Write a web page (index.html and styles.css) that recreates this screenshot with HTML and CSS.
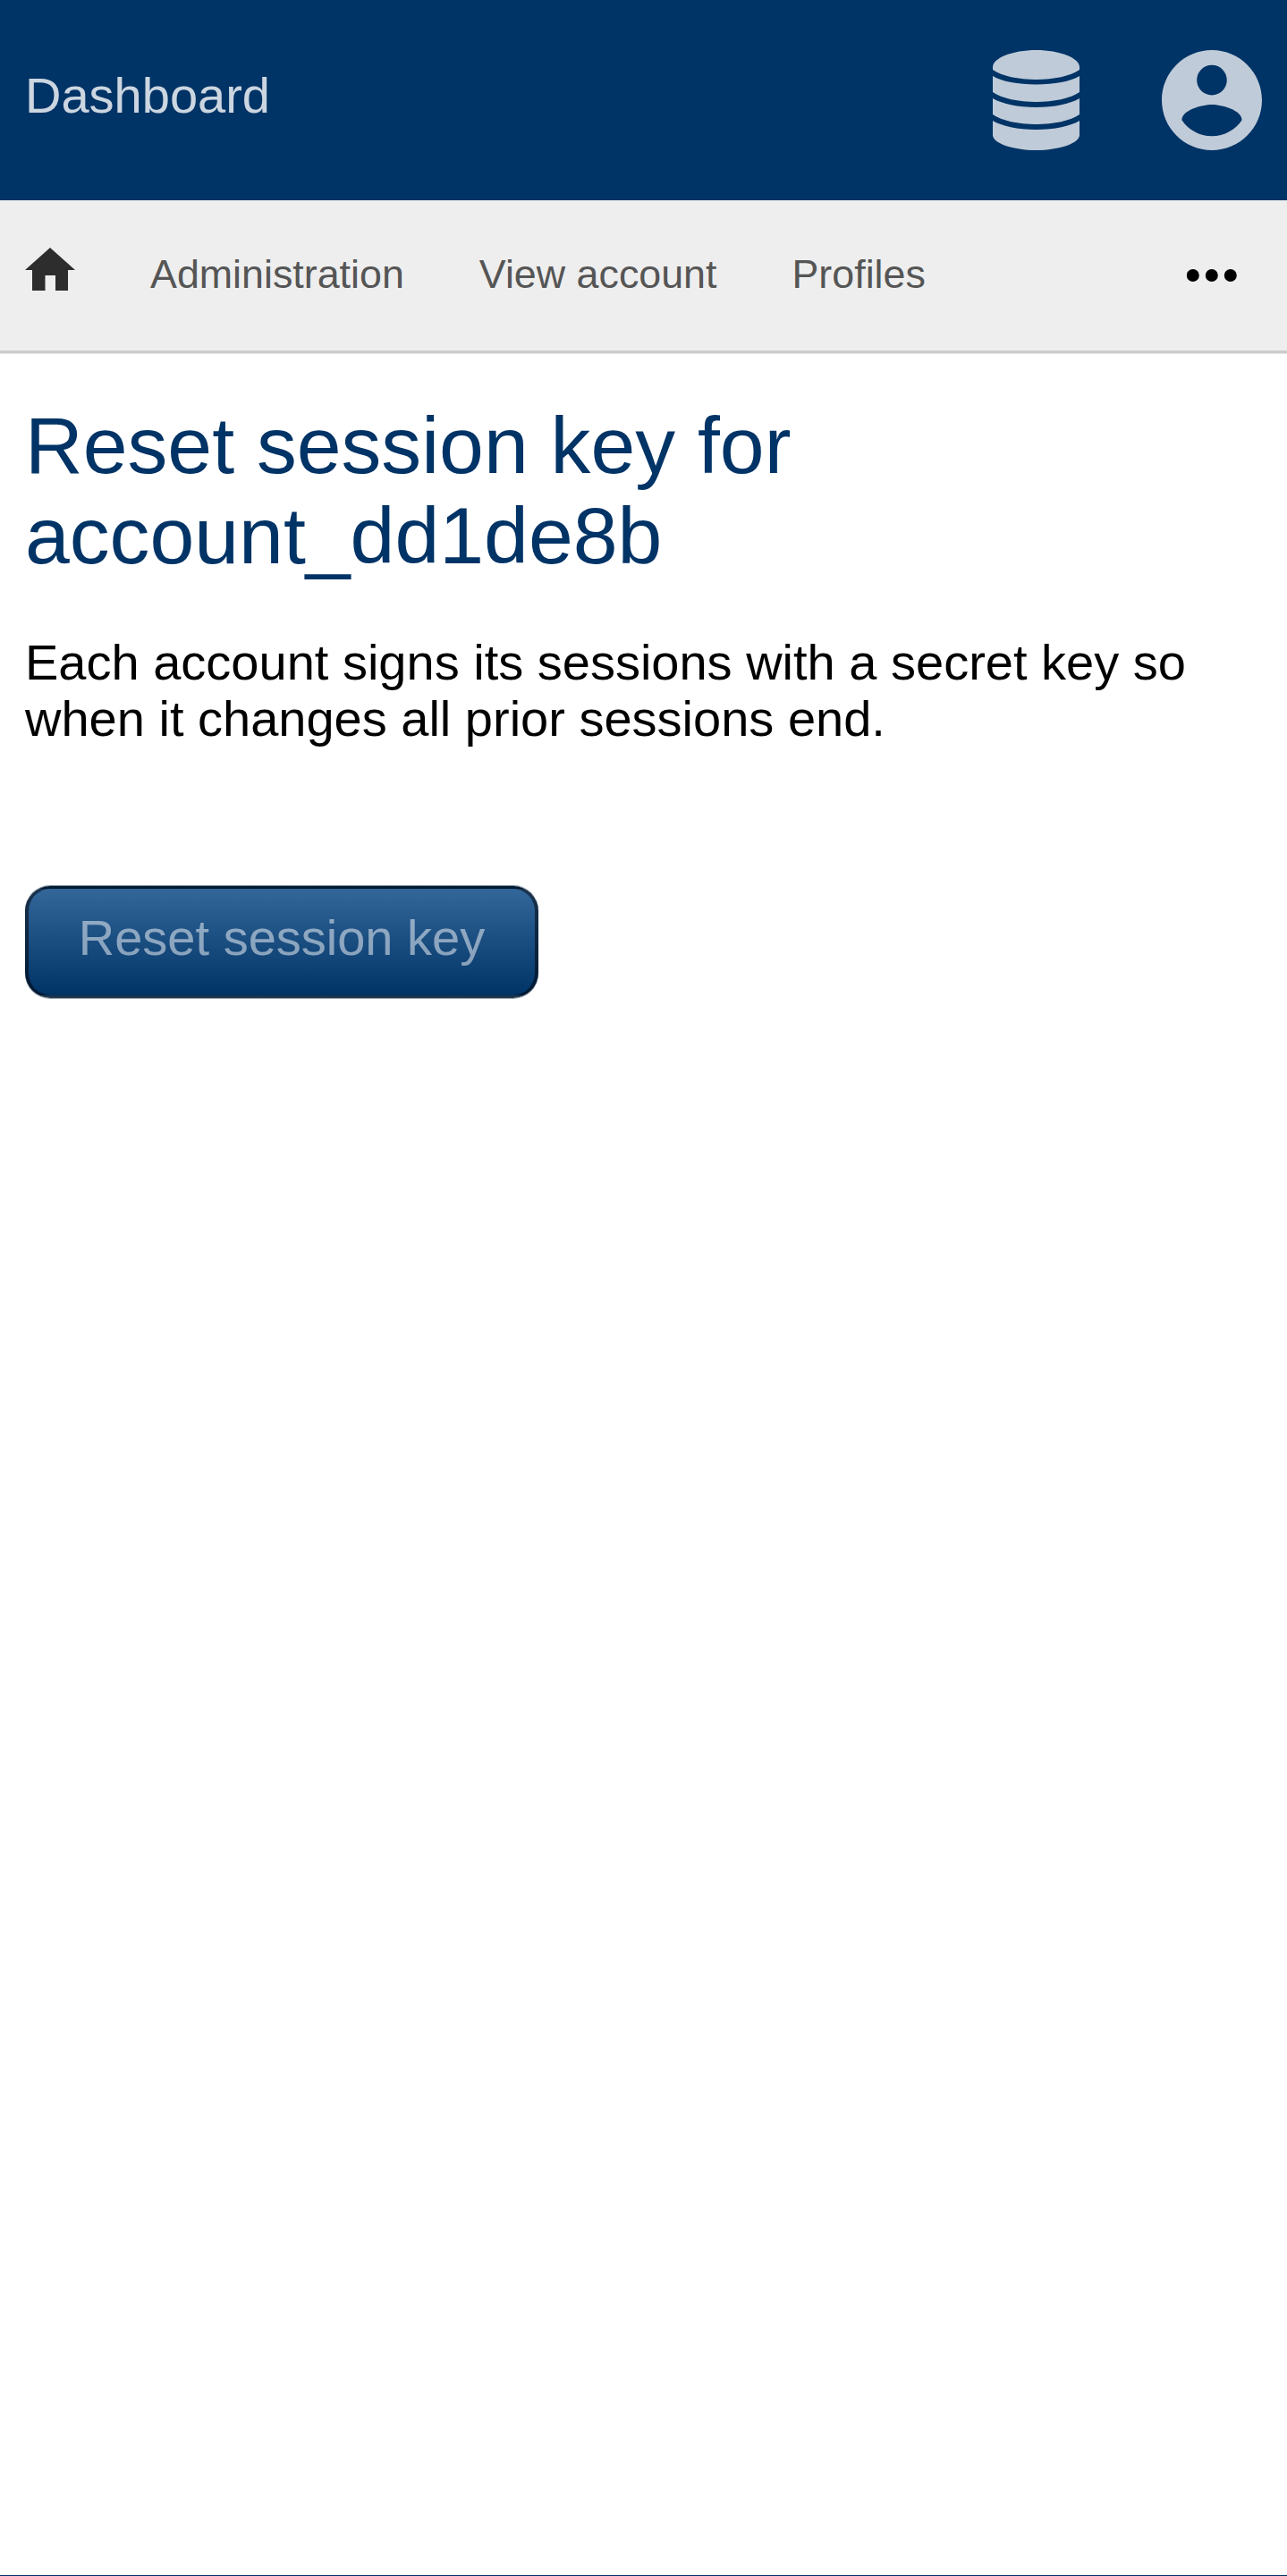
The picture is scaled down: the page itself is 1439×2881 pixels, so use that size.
FILE: index.html
```html
<!DOCTYPE html>
<html lang="en">
<head>
<meta charset="utf-8">
<title>Reset session key</title>
<link rel="stylesheet" href="styles.css">
</head>
<body>
<header class="header">
  <a class="brand">Dashboard</a>
  <div class="menus">
    <svg class="database" viewBox="0 0 97 112">
      <path d="M0 19C0 9 22 0 48.500 0S97 9 97 19V22C87 29 68 33 48.500 33S10 29 0 22Z"/>
      <path d="M0 29C10 35 28 38.500 48.500 38.500S87 35 97 29V47C87 54 68 58 48.500 58S10 54 0 47Z"/>
      <path d="M0 54C10 60 28 64 48.500 64S87 60 97 54V72C87 79 68 83 48.500 83S10 79 0 72Z"/>
      <path d="M0 79C10 85 28 89 48.500 89S87 85 97 79V95C97 104 75 112 48.500 112S0 104 0 95Z"/>
    </svg>
    <svg class="account" viewBox="2 2 20 20"><path d="M12 2C6.480 2 2 6.480 2 12s4.480 10 10 10 10-4.480 10-10S17.520 2 12 2zm0 3c1.660 0 3 1.340 3 3s-1.340 3-3 3-3-1.340-3-3 1.340-3 3-3zm0 14.200c-2.500 0-4.710-1.280-6-3.220.030-1.990 4-3.080 6-3.080 1.990 0 5.970 1.090 6 3.080-1.290 1.940-3.500 3.220-6 3.220z"/></svg>
  </div>
</header>
<nav class="nav">
  <svg class="home" viewBox="0 0 56 48"><path d="M28 0L56 25H48V48H34V31H22.500V48H8V25H0Z"/></svg>
  <a>Administration</a>
  <a>View account</a>
  <a>Profiles</a>
  <svg class="more" viewBox="0 0 56 14"><circle cx="6.800" cy="7" r="7"/><circle cx="27.800" cy="7" r="7"/><circle cx="48.800" cy="7" r="7"/></svg>
</nav>
<main class="content">
  <h1>Reset session key for account_dd1de8b</h1>
  <p>Each account signs its sessions with a secret key so when it changes all prior sessions end.</p>
  <button class="submit">Reset session key</button>
</main>
<footer class="footer"></footer>
</body>
</html>
```
FILE: styles.css
```css
* { box-sizing: border-box; }
body {
  margin: 0;
  height: 2881px;
  display: flex;
  flex-direction: column;
  background: #fff;
  color: #000;
  font: 56px/63px "Liberation Sans", Arial, sans-serif;
  overflow: hidden;
}
.header {
  height: 224px;
  flex: none;
  padding: 0 28px;
  display: flex;
  align-items: center;
  justify-content: space-between;
  background: #036;
}
.brand { color: rgba(255, 255, 255, .8); padding-bottom: 11px; }
.menus { display: flex; gap: 92px; fill: rgba(255, 255, 255, .75); }
.database { width: 97px; height: 112px; }
.account { width: 112px; height: 112px; }
.nav {
  height: 171px;
  flex: none;
  padding: 0 56px 0 28px;
  display: flex;
  align-items: center;
  gap: 84px;
  background: #eee;
  border-bottom: 3px solid #ccc;
  box-shadow: 0 1px 0 #e5e5e5;
  font-size: 44.8px;
  line-height: 50px;
  color: #555;
}
.nav a { padding-bottom: 4px; }
.home { width: 56px; height: 48px; margin-bottom: 14px; fill: #2d2d2d; }
.more { width: 56px; height: 14px; margin-left: auto; fill: #000; }
.content { flex: 1; padding: 53px 28px 0; }
h1 {
  width: 1200px;
  margin: 0;
  color: #036;
  font-size: 89.6px;
  line-height: 101px;
  font-weight: 400;
}
p { margin: 59px 0 156px; }
.submit {
  display: block;
  width: 574px;
  height: 125px;
  padding: 23px 55px 33px;
  border: solid rgba(0, 0, 0, .5);
  border-width: 3px 4px;
  border-radius: 28px;
  background: linear-gradient(#369, #036);
  box-shadow: 0 1px 0 rgba(0, 26, 51, .5), 0 -1px 0 rgba(0, 26, 51, .5);
  color: rgba(255, 255, 255, .5);
  font: inherit;
  white-space: nowrap;
}
.footer { height: 1px; background: #036; }
```
